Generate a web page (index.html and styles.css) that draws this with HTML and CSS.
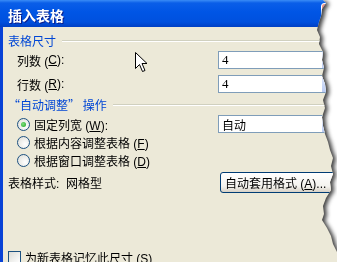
FILE: index.html
```html
<!DOCTYPE html>
<html lang="zh-CN">
<head>
    <meta charset="UTF-8">
    <title>插入表格</title>
    <link rel="stylesheet" href="styles.css">
</head>
<body>
    <div class="tear-shadow">
        <div class="dialog">
            <div class="titlebar">
                <span class="title">插入表格</span>
                <span class="close-btn"></span>
            </div>

            <div class="content">
                <div class="group-head">
                    <span>表格尺寸</span>
                    <span class="etch"></span>
                </div>

                <div class="row row-field">
                    <label class="indent">列数 (<u>C</u>):</label>
                    <div class="field spin">4<span class="spin-btn"></span></div>
                </div>
                <div class="row row-field">
                    <label class="indent">行数 (<u>R</u>):</label>
                    <div class="field spin">4<span class="spin-btn"></span></div>
                </div>

                <div class="group-head head-auto">
                    <span class="cjk">“自动调整” 操作</span>
                    <span class="etch"></span>
                </div>

                <div class="row row-field">
                    <label class="indent radio-label"><span class="radio checked"></span><span>固定列宽 (<u>W</u>):</span></label>
                    <div class="field combo">自动<span class="spin-btn"></span></div>
                </div>
                <div class="row row-radio">
                    <label class="indent radio-label"><span class="radio"></span><span>根据内容调整表格 (<u>F</u>)</span></label>
                </div>
                <div class="row row-radio">
                    <label class="indent radio-label"><span class="radio"></span><span>根据窗口调整表格 (<u>D</u>)</span></label>
                </div>

                <div class="row row-style">
                    <label>表格样式: &nbsp;网格型</label>
                    <button class="xp-btn">自动套用格式 (<u>A</u>)...</button>
                </div>

                <div class="row row-check">
                    <label class="check-label"><span class="check"></span><span>为新表格记忆此尺寸 (<u>S</u>)</span></label>
                </div>
            </div>
        </div>
    </div>

    <svg class="cursor" width="13" height="21" viewBox="0 0 13 21">
        <path d="M0.5 0.5 L0.5 16.5 L4.5 12.5 L7.5 19.5 L10 18.5 L7 11.5 L12 11.5 Z" fill="#fff" stroke="#000" stroke-width="1"/>
    </svg>
</body>
</html>
```

FILE: styles.css
```css
body {
    margin: 0;
    padding: 0;
    background-color: #ffffff;
    overflow: hidden;
    font-family: "Liberation Sans", "Noto Sans CJK SC", sans-serif;
    font-size: 12px;
    color: #000;
}

.cjk {
    font-family: "Noto Sans CJK SC", sans-serif;
}

.tear-shadow {
    width: 345px;
    height: 262px;
    filter: drop-shadow(3px 1px 2px rgba(0, 0, 0, 0.75));
}

.dialog {
    width: 345px;
    height: 262px;
    background-color: #ece9d8;
    border-left: 3px solid #0842d6;
    box-sizing: border-box;
    clip-path: polygon(0 0, 323px 0, 326px 3px, 322px 9px, 321px 16px, 319px 22px, 317px 30px, 320px 37px, 319px 44px, 323px 52px, 322px 60px, 324px 68px, 322px 76px, 325px 84px, 326px 92px, 323px 100px, 325px 108px, 322px 117px, 323px 126px, 325px 134px, 328px 142px, 330px 150px, 333px 158px, 331px 166px, 333px 174px, 330px 182px, 331px 190px, 326px 198px, 323px 206px, 324px 214px, 322px 220px, 327px 228px, 331px 236px, 333px 244px, 337px 252px, 337px 262px, 0 262px);
}

.titlebar {
    height: 27px;
    margin-left: -3px;
    padding: 0 3px 0 8px;
    display: flex;
    align-items: center;
    justify-content: space-between;
    background: linear-gradient(#3a8cf6 0, #0a5ee8 3px, #0055e5 12px, #0050de 22px, #0040c4 27px);
}

.title {
    color: #fff;
    font-weight: bold;
    font-size: 14px;
    padding-top: 2px;
    text-shadow: 1px 1px 0 #0a1e8c;
}

.close-btn {
    width: 21px;
    height: 21px;
    border: 1px solid #fff;
    border-radius: 3px;
    box-sizing: border-box;
    background: linear-gradient(135deg, #f0a090, #e05a3c 50%, #c03a1c);
}

.content {
    padding: 6px 0 0 5px;
}

.group-head {
    height: 14px;
    display: flex;
    align-items: center;
    color: #0046d5;
}

.head-auto {
    margin-top: 4px;
}

.etch {
    flex: 1;
    height: 0;
    margin-left: 6px;
    margin-top: 2px;
    border-top: 1px solid #d0d0bf;
    border-bottom: 1px solid #ffffff;
}

.row {
    display: flex;
    align-items: center;
}

.row-field {
    height: 18px;
    margin-top: 4px;
}

.row-field + .row-field {
    margin-top: 6px;
}

.row-radio {
    height: 18px;
}

.row-style {
    height: 20px;
    margin-top: 3px;
}

.row-check {
    height: 12px;
    margin-top: 59px;
}

.row label {
    width: 210px;
    flex: none;
    display: flex;
    align-items: center;
}

.indent {
    padding-left: 9px;
    box-sizing: border-box;
}

.field {
    width: 120px;
    height: 18px;
    box-sizing: border-box;
    border: 1px solid #7f9db9;
    background-color: #fff;
    padding-left: 3px;
    display: flex;
    align-items: center;
    justify-content: space-between;
}

.spin {
    font-family: "Liberation Serif", serif;
    font-size: 13px;
}

.spin-btn {
    width: 15px;
    height: 16px;
    background: linear-gradient(#dde6fb, #bccdf4);
}

.radio-label {
    gap: 4px;
}

.radio {
    width: 13px;
    height: 13px;
    box-sizing: border-box;
    border: 1px solid #1c5180;
    border-radius: 50%;
    background: radial-gradient(circle at 65% 65%, #ffffff, #dcdcd5);
    display: flex;
    align-items: center;
    justify-content: center;
}

.radio.checked::after {
    content: "";
    width: 5px;
    height: 5px;
    border-radius: 50%;
    background: radial-gradient(circle at 40% 40%, #7ee07e, #21a121);
}

.xp-btn {
    height: 21px;
    width: 120px;
    margin-left: 2px;
    padding: 0 0 0 4px;
    text-align: left;
    font-family: inherit;
    font-size: 12px;
    color: #000;
    border: 1px solid #003c74;
    border-radius: 3px;
    background: linear-gradient(#ffffff, #f4f3ee 70%, #d6d0c5);
    white-space: nowrap;
}

.check-label {
    gap: 4px;
}

.check {
    width: 13px;
    height: 13px;
    box-sizing: border-box;
    border: 1px solid #1c5180;
    background: linear-gradient(135deg, #dcdcd7, #ffffff);
}

.cursor {
    position: absolute;
    left: 135px;
    top: 52px;
}
```
